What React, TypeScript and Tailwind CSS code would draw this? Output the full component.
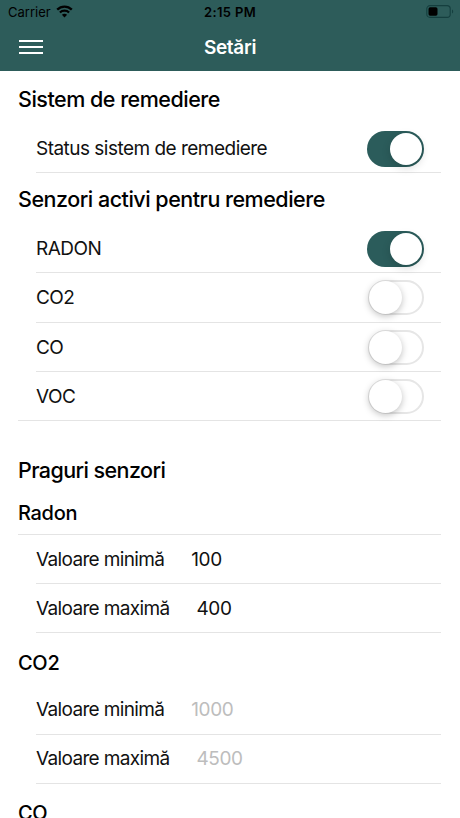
import { useState } from 'react'

interface SensorLimits {
  name: string
  ruled: boolean
  min?: number
  max?: number
  minHint: string
  maxHint: string
}

const sensors = ['RADON', 'CO2', 'CO', 'VOC']

const limits: SensorLimits[] = [
  { name: 'Radon', ruled: true, min: 100, max: 400, minHint: '100', maxHint: '400' },
  { name: 'CO2', ruled: false, minHint: '1000', maxHint: '4500' },
]

function StatusBar() {
  return (
    <div className="grid h-6 grid-cols-3 items-center pl-2 pr-1.5 text-[13px] text-black">
      <div className="flex items-center gap-[5px]">
        <span className="tracking-[0px]">Carrier</span>
        <svg className="-mt-px" width="17" height="13" viewBox="0 0 17 13" fill="none" stroke="black" strokeWidth="2.3">
          <path d="M1.2 4.6C5.3.5 11.7.5 15.8 4.6" />
          <path d="M3.9 7.5C6.5 5.1 10.5 5.1 13.1 7.5" />
          <path d="M8.5 12.4 5.9 9.7C7.3 8.4 9.7 8.4 11.1 9.7Z" fill="black" stroke="none" />
        </svg>
      </div>
      <span className="-ml-0.5 text-center font-semibold tracking-[0.35px]">2:15 PM</span>
      <svg className="-mt-px justify-self-end" width="28" height="13" viewBox="0 0 28 13">
        <rect x=".8" y=".6" width="23.4" height="11.8" rx="3.2" fill="none" stroke="#153f3f" strokeWidth="1.1" />
        <rect x="2.5" y="2.3" width="9" height="8.4" rx="1.6" fill="black" />
        <path d="M26 4.5c1.6.7 1.6 3.3 0 4Z" fill="#153f3f" />
      </svg>
    </div>
  )
}

function Toggle({ on, label, onChange }: { on: boolean; label: string; onChange: () => void }) {
  return (
    <button
      role="switch"
      aria-checked={on}
      aria-label={label}
      onClick={onChange}
      className={`mr-[17px] flex items-center rounded-full ${
        on ? 'h-9 w-[57px] justify-end bg-[#2b5c5b] pr-0.5' : 'h-[35px] w-14 border-2 border-[#e6e6e6] bg-white'
      }`}
    >
      <span
        className={`rounded-full bg-white ${
          on ? 'size-8 shadow-[0_3px_9px_rgba(0,0,0,0.15)]' : '-ml-px size-[33px] shadow-[0_2px_7px_rgba(0,0,0,0.25)]'
        }`}
      />
    </button>
  )
}

function SwitchRow({ label, initial = false, last = false }: { label: string; initial?: boolean; last?: boolean }) {
  const [on, setOn] = useState(initial)

  return (
    <div className={last ? 'border-b border-[#e4e4e4]' : ''}>
      <div className={`ml-[18px] flex items-center justify-between pt-px ${last ? 'h-[48.2px]' : 'h-[49.2px] border-b border-[#e4e4e4]'}`}>
        <span className="pt-px">{label}</span>
        <Toggle on={on} label={label} onChange={() => setOn(!on)} />
      </div>
    </div>
  )
}

function ValueRow({ label, value, hint }: { label: string; value?: number; hint: string }) {
  return (
    <label className="ml-[18px] flex h-[49.2px] items-center border-b border-[#e4e4e4] pt-[1.5px]">
      <span className="tracking-[-0.65px]">{label}</span>
      <input
        className="ml-[27px] w-40 bg-transparent tracking-[-0.4px] outline-none placeholder:text-[#bdbdbd]"
        defaultValue={value}
        placeholder={hint}
      />
    </label>
  )
}

export default function App() {
  return (
    <div className="h-[818px] overflow-hidden bg-white font-['Inter','Liberation_Sans',sans-serif] text-[19px] leading-6 tracking-[-0.52px] text-[#111]">
      {/* Header */}
      <header className="h-[71px] bg-[#2d5c5a]">
        <StatusBar />
        <div className="grid h-[46px] grid-cols-3 items-center">
          <button aria-label="Meniu" className="ml-[19px] flex w-6 flex-col gap-1">
            <span className="h-0.5 bg-white" />
            <span className="h-0.5 bg-white" />
            <span className="h-0.5 bg-white" />
          </button>
          <h1 className="pt-px text-center font-semibold tracking-[-0.3px] text-white">Setări</h1>
        </div>
      </header>

      <main className="pl-[18px] pr-[19px]">
        {/* Remediation system */}
        <h2 className="flex h-[53px] items-center pt-[3px] text-[21.5px] font-medium tracking-[-0.49px] text-black">Sistem de remediere</h2>
        <SwitchRow label="Status sistem de remediere" initial />

        {/* Active sensors */}
        <h2 className="flex h-[51px] items-center pt-px text-[21.5px] font-medium tracking-[-0.49px] text-black">Senzori activi pentru remediere</h2>
        {sensors.map((name, index) => (
          <SwitchRow key={name} label={name} initial={index === 0} last={index === sensors.length - 1} />
        ))}

        {/* Thresholds */}
        <h2 className="flex h-[71px] items-end pb-[10px] text-[21.5px] font-medium tracking-[-0.58px] text-black">Praguri senzori</h2>
        {limits.map((sensor) => (
          <section key={sensor.name}>
            <h3
              className={
                sensor.ruled
                  ? 'flex h-[43px] items-center border-b border-[#e4e4e4] text-xl font-medium tracking-[-0.3px] text-black'
                  : 'flex h-[52px] items-center pt-[7px] text-xl font-medium tracking-[-0.3px] text-black'
              }
            >
              {sensor.name}
            </h3>
            <ValueRow label="Valoare minimă" value={sensor.min} hint={sensor.minHint} />
            <ValueRow label="Valoare maximă" value={sensor.max} hint={sensor.maxHint} />
          </section>
        ))}
        <h3 className="flex h-[52px] items-center pt-[7px] text-xl font-medium tracking-[-0.3px] text-black">CO</h3>
      </main>
    </div>
  )
}
